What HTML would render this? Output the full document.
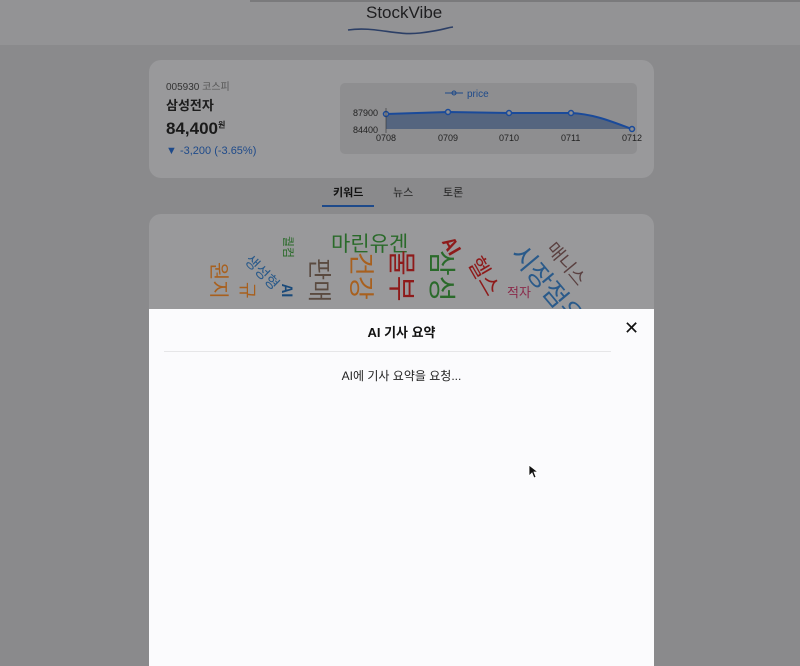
<!DOCTYPE html>
<html><head><meta charset="utf-8"><style>
body{margin:0;width:800px;height:666px;overflow:hidden;background:#8a8a8c;font-family:"Liberation Sans","Noto Sans CJK KR",sans-serif;position:relative}
.hdr{position:absolute;left:0;top:0;width:800px;height:45px;background:#939395}
.t{position:absolute;white-space:nowrap}
.card{position:absolute;background:#99999b;border-radius:12px}
.w{position:absolute;white-space:nowrap;font-family:"Noto Sans CJK KR",sans-serif;transform-origin:left top}
</style></head><body>
<div class="hdr"></div>
<div style="position:absolute;left:250px;top:0;width:550px;height:2px;background:#7a7a7c"></div>
<div class="t" style="left:366px;top:3px;font-size:17px;color:#1e1e20">StockVibe</div>
<svg style="position:absolute;left:345px;top:24px" width="112" height="14"><path d="M3 6 C30 2,50 12,75 9 S100 4,108 3" stroke="#2c3f66" stroke-width="1.6" fill="none"/></svg>

<div class="card" style="left:149px;top:60px;width:505px;height:118px"></div>
<div class="t" style="left:166px;top:78px;font-size:10px;color:#333">005930 <span style="color:#555">코스피</span></div>
<div class="t" style="left:166px;top:95px;font-size:13px;font-weight:bold;color:#1c1c1c">삼성전자</div>
<div class="t" style="left:166px;top:119px;font-size:17px;font-weight:bold;color:#1a1a1a">84,400<sup style="font-size:8px">원</sup></div>
<div class="t" style="left:166px;top:145px;font-size:11px;color:#1e4a8a">▼ -3,200 (-3.65%)</div>
<div style="position:absolute;left:340px;top:83px;width:297px;height:71px;background:#8e8e90;border-radius:5px"></div>
<svg style="position:absolute;left:340px;top:83px" width="310" height="71">
<text x="127" y="14" font-size="10" fill="#1e4a8a" font-family="Liberation Sans">price</text>
<line x1="105" y1="10" x2="123" y2="10" stroke="#1e4a8a"/><circle cx="114" cy="10" r="2" fill="none" stroke="#1e4a8a"/>
<text x="13" y="33" font-size="9" fill="#222" font-family="Liberation Sans">87900</text>
<text x="13" y="50" font-size="9" fill="#222" font-family="Liberation Sans">84400</text>
<path d="M46 31 L108 29 L169 30 L231 30 C255 31,275 40,292 46 L292 46 L46 46Z" fill="#55657f"/>
<path d="M46 31 L108 29 L169 30 L231 30 C255 31,275 40,292 46" stroke="#1a4a9a" stroke-width="2" fill="none"/>
<g fill="#8e8e90" stroke="#1a4a9a" stroke-width="1.5"><circle cx="46" cy="31" r="2.5"/><circle cx="108" cy="29" r="2.5"/><circle cx="169" cy="30" r="2.5"/><circle cx="231" cy="30" r="2.5"/><circle cx="292" cy="46" r="2.5"/></g>
<line x1="46" y1="25" x2="46" y2="50" stroke="#333" stroke-width=".6"/>
<g font-size="9" fill="#222" font-family="Liberation Sans"><text x="36" y="58">0708</text><text x="98" y="58">0709</text><text x="159" y="58">0710</text><text x="221" y="58">0711</text><text x="282" y="58">0712</text></g>
</svg>
<div class="t" style="left:333px;top:184px;font-size:11px;font-weight:bold;color:#111">키워드</div>
<div class="t" style="left:393px;top:184px;font-size:11px;color:#222">뉴스</div>
<div class="t" style="left:443px;top:184px;font-size:11px;color:#222">토론</div>
<div style="position:absolute;left:322px;top:205px;width:52px;height:2px;background:#1e4a8a"></div>

<div class="card" style="left:149px;top:214px;width:505px;height:140px;overflow:hidden">
<div class="w" style="left:182px;top:14px;font-size:21px;color:#2a6a2a">마린유겐</div>
<div class="w" style="left:148px;top:22px;font-size:12px;color:#2a6a2a;transform:rotate(90deg)">퀄컴</div>
<div class="w" style="left:106px;top:36px;font-size:15px;color:#2a5a8a;transform:rotate(45deg)">생성형</div>
<div class="w" style="left:148px;top:70px;font-size:14px;font-weight:bold;color:#1a4a7a;transform:rotate(90deg)">AI</div>
<div class="w" style="left:190px;top:44px;font-size:24px;color:#5a4a40;transform:rotate(90deg)">판매</div>
<div class="w" style="left:232px;top:38px;font-size:26px;color:#a8601e;transform:rotate(90deg)">건강</div>
<div class="w" style="left:274px;top:36px;font-size:28px;color:#8e1a1a;transform:rotate(90deg)">물부</div>
<div class="w" style="left:314px;top:36px;font-size:28px;color:#2a6a2a;transform:rotate(90deg)">삼성</div>
<div class="w" style="left:310px;top:18px;font-size:18px;font-weight:bold;color:#8e1a1a;transform:rotate(60deg)">AI</div>
<div class="w" style="left:340px;top:36px;font-size:22px;color:#8e1a1a;transform:rotate(60deg)">헬스</div>
<div class="w" style="left:358px;top:68px;font-size:13px;color:#8a2a4a">적자</div>
<div class="w" style="left:383px;top:22px;font-size:26px;color:#2a5a8a;transform:rotate(50deg)">시장점유</div>
<div class="w" style="left:412px;top:22px;font-size:18px;color:#5a4040;transform:rotate(50deg)">매니스</div>
<div class="w" style="left:86px;top:48px;font-size:20px;color:#a8601e;transform:rotate(90deg)">원지</div>
<div class="w" style="left:112px;top:68px;font-size:18px;color:#a8601e;transform:rotate(90deg)">규</div>
</div>

<div style="position:absolute;left:149px;top:309px;width:505px;height:357px;background:#fbfbfd"></div>
<div class="t" style="left:0;width:803px;text-align:center;top:322px;font-size:13px;font-weight:bold;color:#111">AI 기사 요약</div>
<div class="t" style="left:624px;top:318px;font-size:18px;color:#111">✕</div>
<div style="position:absolute;left:164px;top:351px;width:447px;height:1px;background:#e6e6e8"></div>
<div class="t" style="left:0;width:803px;text-align:center;top:367px;font-size:12px;color:#222">AI에 기사 요약을 요청...</div>
<svg style="position:absolute;left:528px;top:464px" width="10" height="15"><path d="M1 1 L1 12 L4 9 L6 14 L8 13 L6 8 L10 8Z" fill="#111" stroke="#fff" stroke-width=".8"/></svg>
</body></html>
